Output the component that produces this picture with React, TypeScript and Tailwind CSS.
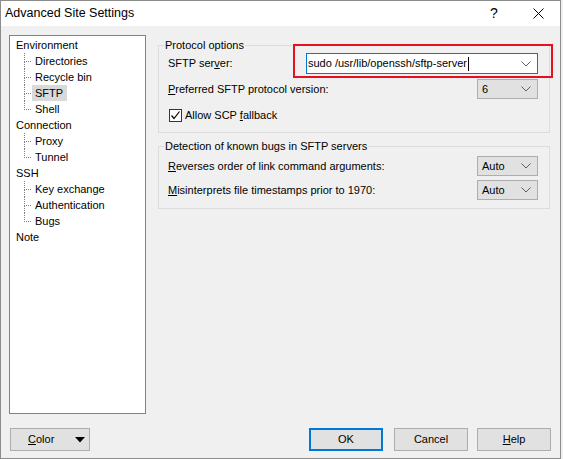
import React from 'react';

const font = { fontFamily: '"Liberation Sans", Arial, sans-serif' };

const tree = [
  { label: 'Environment', children: ['Directories', 'Recycle bin', 'SFTP', 'Shell'] },
  { label: 'Connection', children: ['Proxy', 'Tunnel'] },
  { label: 'SSH', children: ['Key exchange', 'Authentication', 'Bugs'] },
  { label: 'Note', children: [] as string[] },
];

function Chevron({ color = '#606060' }: { color?: string }) {
  return (
    <svg width="10" height="6" viewBox="0 0 10 6" className="shrink-0">
      <polyline points="0.5,0.5 5,5 9.5,0.5" fill="none" stroke={color} strokeWidth="1" />
    </svg>
  );
}

function Combo({ value, width }: { value: string; width: string }) {
  return (
    <div
      className={`${width} h-[20px] flex items-center justify-between bg-[#e1e1e1] border border-[#adadad] pl-[4px] pr-[6px]`}
    >
      <span>{value}</span>
      <Chevron />
    </div>
  );
}

const vDots =
  'w-[1px] bg-[repeating-linear-gradient(to_bottom,#7f7f7f_0px,#7f7f7f_1px,transparent_1px,transparent_2px)]';
const hDots =
  'h-[1px] bg-[repeating-linear-gradient(to_right,#7f7f7f_0px,#7f7f7f_1px,transparent_1px,transparent_2px)]';

function TreeChild({ label, last, selected }: { label: string; last: boolean; selected?: boolean }) {
  return (
    <div className="flex h-[16px]">
      <div className="ml-[14px] w-[8px] flex flex-col">
        <div className={`h-[8px] ${vDots}`} />
        <div className={`w-[8px] ${hDots}`} />
        {!last && <div className={`h-[7px] ${vDots}`} />}
      </div>
      <span
        className={`h-[16px] leading-[16px] pl-[3px] pr-[4px] ${selected ? 'bg-[#d9d9d9]' : ''}`}
      >
        {label}
      </span>
    </div>
  );
}

export default function App() {
  return (
    <div className="w-[563px] h-[459px] bg-[#f0f0f0] text-[11px] text-black" style={font}>
      <div className="relative w-[561px] h-[459px] border border-[#8c8c8c] bg-[#f0f0f0] flex flex-col">
        {/* title bar */}
        <div className="h-[25px] bg-white flex items-center shrink-0">
          <span className="ml-[4px] text-[12.5px]">Advanced Site Settings</span>
          <div className="ml-auto flex h-full">
            <div className="w-[44px] flex items-center justify-center text-[14px]">?</div>
            <div className="w-[44px] flex items-center justify-center">
              <svg width="11" height="11" viewBox="0 0 11 11">
                <path d="M0.5 0.5 L10.5 10.5 M10.5 0.5 L0.5 10.5" stroke="#000" strokeWidth="1" />
              </svg>
            </div>
          </div>
        </div>

        {/* body */}
        <div className="flex pt-[9px] pl-[8px]">
          <div className="w-[137px] h-[379px] bg-white border border-[#828282] pt-[1px] leading-[16px]">
            {tree.map((g) => (
              <div key={g.label}>
                <div className="h-[16px] pl-[6px]">{g.label}</div>
                {g.children.map((c, i) => (
                  <TreeChild
                    key={c}
                    label={c}
                    last={i === g.children.length - 1}
                    selected={c === 'SFTP'}
                  />
                ))}
              </div>
            ))}
          </div>

          <div className="ml-[12px] w-[392px] pt-[2px]">
            <fieldset className="border border-[#dcdcdc] p-0 m-0">
              <legend className="ml-[5px] px-[1px] leading-[16px]">Protocol options</legend>
              <div className="pl-[9px] pr-[11px] pb-[9px]">
                <div className="h-[21px] flex items-center justify-between">
                  <span>
                    SFTP ser<u>v</u>er:
                  </span>
                  <div className="w-[232px] h-[21px] flex items-center justify-between bg-white border border-[#0078d7] pl-[1px] pr-[6px]">
                    <span className="flex items-center">
                      sudo /usr/lib/openssh/sftp-server
                      <span className="inline-block w-[1px] h-[14px] bg-black ml-[1px]" />
                    </span>
                    <Chevron />
                  </div>
                </div>
                <div className="mt-[5px] h-[20px] flex items-center justify-between">
                  <span>
                    <u>P</u>referred SFTP protocol version:
                  </span>
                  <Combo value="6" width="w-[61px]" />
                </div>
                <div className="mt-[8px] h-[16px] flex items-center">
                  <div className="ml-[1px] w-[13px] h-[13px] border border-[#333333] bg-white flex items-center justify-center">
                    <svg width="11" height="11" viewBox="0 0 11 11">
                      <polyline points="1.5,5.5 4,8.5 9.5,1.5" fill="none" stroke="#000" strokeWidth="1.2" />
                    </svg>
                  </div>
                  <span className="ml-[3px]">
                    Allow SCP <u>f</u>allback
                  </span>
                </div>
              </div>
            </fieldset>

            <fieldset className="mt-[5px] border border-[#dcdcdc] p-0 m-0">
              <legend className="ml-[5px] px-[1px] leading-[16px]">
                Detection of known bugs in SFTP servers
              </legend>
              <div className="pl-[9px] pr-[11px] pt-[2px] pb-[8px]">
                <div className="h-[20px] flex items-center justify-between">
                  <span>
                    <u>R</u>everses order of link command arguments:
                  </span>
                  <Combo value="Auto" width="w-[61px]" />
                </div>
                <div className="mt-[4px] h-[20px] flex items-center justify-between">
                  <span>
                    <u>M</u>isinterprets file timestamps prior to 1970:
                  </span>
                  <Combo value="Auto" width="w-[61px]" />
                </div>
              </div>
            </fieldset>
          </div>
        </div>

        {/* buttons */}
        <div className="mt-[14px] h-[23px] flex">
          <div className="ml-[9px] w-[80px] h-[23px] bg-[#e1e1e1] border border-[#adadad] flex items-center justify-between pl-[17px] pr-[4px]">
            <span>
              <u>C</u>olor
            </span>
            <svg width="10" height="6" viewBox="0 0 10 6">
              <polygon points="0,0 10,0 5,5.5" fill="#000" />
            </svg>
          </div>
          <div className="ml-auto w-[74px] h-[23px] bg-[#e1e1e1] border-2 border-[#0078d7] flex items-center justify-center">
            OK
          </div>
          <div className="ml-[11px] w-[74px] h-[23px] bg-[#e1e1e1] border border-[#adadad] flex items-center justify-center">
            Cancel
          </div>
          <div className="ml-[9px] mr-[9px] w-[74px] h-[23px] bg-[#e1e1e1] border border-[#adadad] flex items-center justify-center">
            <span>
              <u>H</u>elp
            </span>
          </div>
        </div>

        {/* red highlight annotation */}
        <div className="absolute left-[292px] top-[43px] w-[260px] h-[34px] border-2 border-[#e8101e] pointer-events-none" />
      </div>
    </div>
  );
}
